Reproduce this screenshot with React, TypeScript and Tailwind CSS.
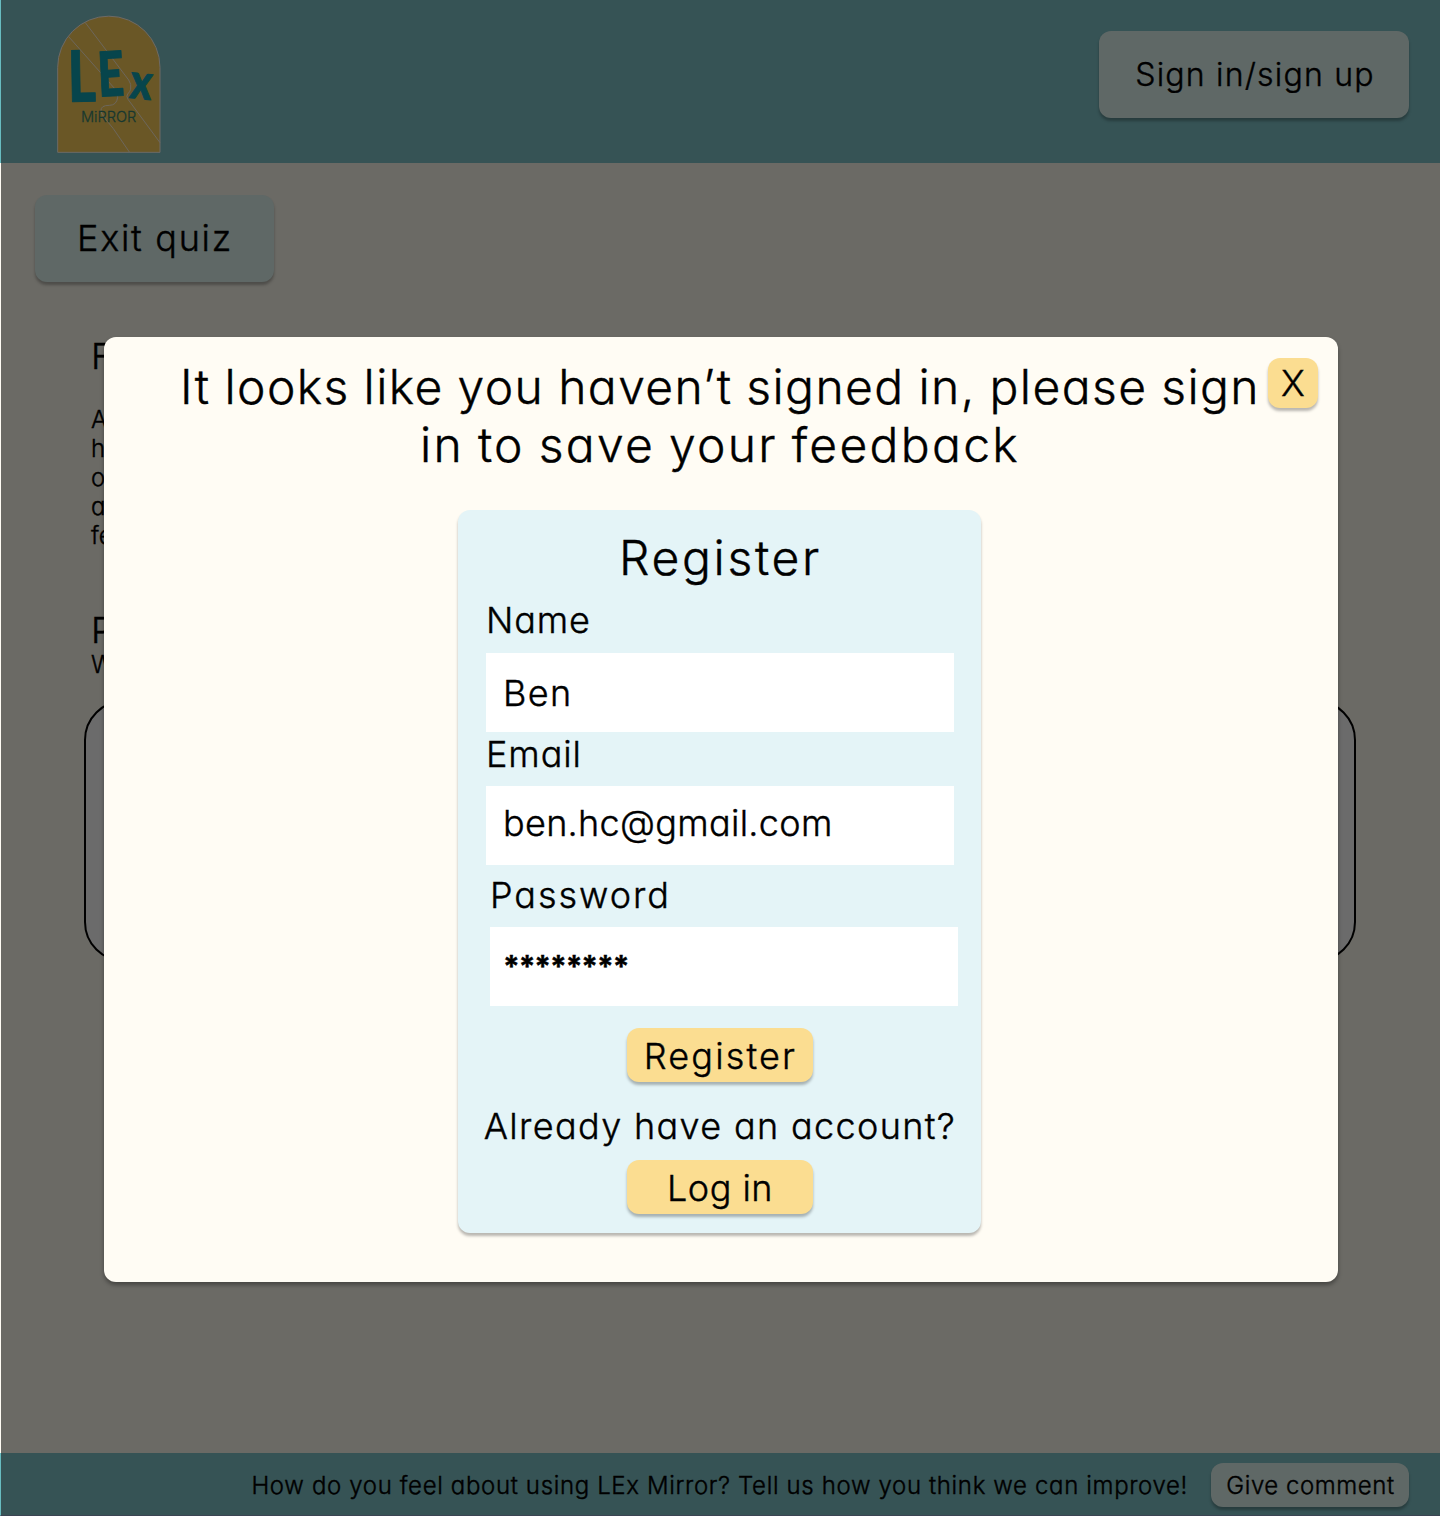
import type { ReactNode } from "react";

const SHADOW = "shadow-[0_3px_3px_rgba(0,0,0,0.28)]";

function Logo() {
  return (
    <svg className="h-[139px] w-[104px] [-webkit-text-stroke:0]" viewBox="51 45 312 417" fill="none">
      <path
        d="M53 457V202a153.500 153.500 0 0 1 307 0V457Z"
        fill="#6a5726"
        stroke="#6d6a66"
        strokeWidth="3"
      />
      <g stroke="#6d6a66" strokeWidth="2.500">
        <path d="M136 68L266 240Q275 252 272 268Q270 275 263 282Q258 288 264 298L360 428" />
        <path d="M86 110L226 268Q234 278 233 292Q230 316 208 316Q182 316 183 332Q184 342 194 354L220 386L268 456" />
      </g>
      <g fill="#07454c" stroke="#07454c" strokeWidth="3" strokeLinejoin="round" fontFamily="Lato" fontWeight="900">
        <text transform="translate(85 305) rotate(-1) scale(0.76 1)" fontSize="212">L</text>
        <text transform="translate(176 290) rotate(-3) scale(0.74 1)" fontSize="186">E</text>
        <text transform="translate(266 293) rotate(6) scale(0.84 1)" fontSize="148">x</text>
      </g>
      <text
        x="123"
        y="366"
        fill="#17382f"
        stroke="#17382f"
        strokeWidth="0.8"
        fontFamily="Inter"
        fontWeight="300"
        fontSize="43"
        textLength="166"
        lengthAdjust="spacingAndGlyphs"
      >
        MiRROR
      </text>
    </svg>
  );
}

function Field({ label, labelClass, boxClass, children }: { label: string; labelClass: string; boxClass: string; children: ReactNode }) {
  return (
    <label className="block">
      <span className={`block h-[44px] text-[36px] leading-[44px] ${labelClass}`}>{label}</span>
      <span className={`flex h-[79px] w-[468px] items-center bg-white text-[36px] leading-none ${boxClass}`}>{children}</span>
    </label>
  );
}

export default function App() {
  return (
    <div
      className="relative flex h-[1516px] w-[1440px] flex-col overflow-hidden bg-[#6b6a65] font-[Inter,sans-serif] font-light whitespace-nowrap text-black [font-feature-settings:'cv11'] [-webkit-text-stroke:0.4px_black]"
    >
      <header className="flex h-[163px] items-start justify-between border-l border-[#68bcc0] bg-[#365355] pr-[31px] pl-[56px]">
        <div className="pt-[15px]">
          <Logo />
        </div>
        <button className={`mt-[31px] h-[87px] w-[310px] rounded-xl bg-[#5f6866] pl-[2px] text-[32px] tracking-[1.200px] ${SHADOW}`}>
          Sign in/sign up
        </button>
      </header>

      <main className="flex-1 border-l border-[#fffcf4] pl-[34px]">
        <button className={`mt-[32px] block h-[87px] w-[239px] rounded-xl bg-[#5f6866] pb-[2px] pl-px text-[36px] tracking-[1.700px] ${SHADOW}`}>
          Exit quiz
        </button>
        <div className="pl-[56px]">
          <h2 className="mt-[52px] text-[36px] leading-[44px]">F</h2>
          <p className="mt-[27px] text-[24px] leading-[29px]">
            A<br />h<br />o<br />a<br />fe
          </p>
          <h2 className="mt-[58px] text-[36px] leading-[44px]">P</h2>
          <p className="-mt-[2px] text-[24px] leading-[29px]">W</p>
        </div>
        <div className="mt-[21px] ml-[49px] h-[262px] w-[1272px] rounded-[40px] border-2 border-black bg-[#6b6b6b]" />
      </main>

      <footer className="flex h-[63px] items-start justify-end border-b border-l border-b-[#3b4453] border-l-[#68bcc0] bg-[#365355] pr-[31px] text-[24px]">
        <p className="mt-[18px] mr-[23px] leading-[30px] tracking-[0.640px]">
          How do you feel about using LEx Mirror? Tell us how you think we can improve!
        </p>
        <button className={`mt-[10px] h-[44px] w-[198px] rounded-xl bg-[#5f6866] pt-px pl-px tracking-[0.550px] ${SHADOW}`}>
          Give comment
        </button>
      </footer>

      <section
        role="dialog"
        className="absolute top-[337px] left-[104px] h-[945px] w-[1234px] rounded-xl bg-[#fffcf4] shadow-[0_3px_4px_rgba(0,0,0,0.35)]"
      >
        <h1 className="pt-[21px] pr-[2px] text-center text-[48px] leading-[58px]">
          <span className="block tracking-[1.400px] [word-spacing:-1px]">It looks like you haven’t signed in, please sign</span>
          <span className="block tracking-[2.300px] [word-spacing:-2px]">in to save your feedback</span>
        </h1>
        <button
          aria-label="Close"
          className={`absolute top-[21px] right-[20px] flex size-[50px] items-center justify-center rounded-xl bg-[#fbdd91] text-[36px] ${SHADOW}`}
        >
          X
        </button>

        <form className={`mt-[36px] ml-[354px] h-[723px] w-[523px] rounded-xl bg-[#e4f4f7] pt-[19px] pl-[28px] ${SHADOW}`}>
          <h2 className="mr-[26px] text-center text-[48px] leading-[58px] tracking-[2.700px]">Register</h2>
          <div className="mt-[11px]">
            <Field label="Name" labelClass="mb-[11px] tracking-[0.900px]" boxClass="pt-px pl-[17px] tracking-[1.400px]">
              Ben
            </Field>
          </div>
          <Field label="Email" labelClass="mb-[10px] tracking-[0.900px]" boxClass="pb-[6px] pl-[17px] tracking-[0.300px]">
            ben.hc@gmail.com
          </Field>
          <div className="mt-[8px] ml-[4px]">
            <Field label="Password" labelClass="mb-[10px] tracking-[1.950px]" boxClass="pb-[2px] pl-[13px]">
              <span className="text-[30px] font-bold tracking-[-1.100px]">********</span>
            </Field>
          </div>
          <div className="mr-[27px] flex flex-col items-center text-[36px]">
            <button type="button" className={`mt-[22px] mr-px h-[54px] w-[186px] rounded-xl bg-[#fbdd91] pt-px pl-[2px] tracking-[2.150px] ${SHADOW}`}>
              Register
            </button>
            <p className="mt-[22px] leading-[44px] tracking-[1.350px]">Already have an account?</p>
            <button type="button" className={`mt-[12px] mr-px h-[54px] w-[186px] rounded-xl bg-[#fbdd91] pt-px pl-px tracking-[0.500px] ${SHADOW}`}>
              Log in
            </button>
          </div>
        </form>
      </section>
    </div>
  );
}
